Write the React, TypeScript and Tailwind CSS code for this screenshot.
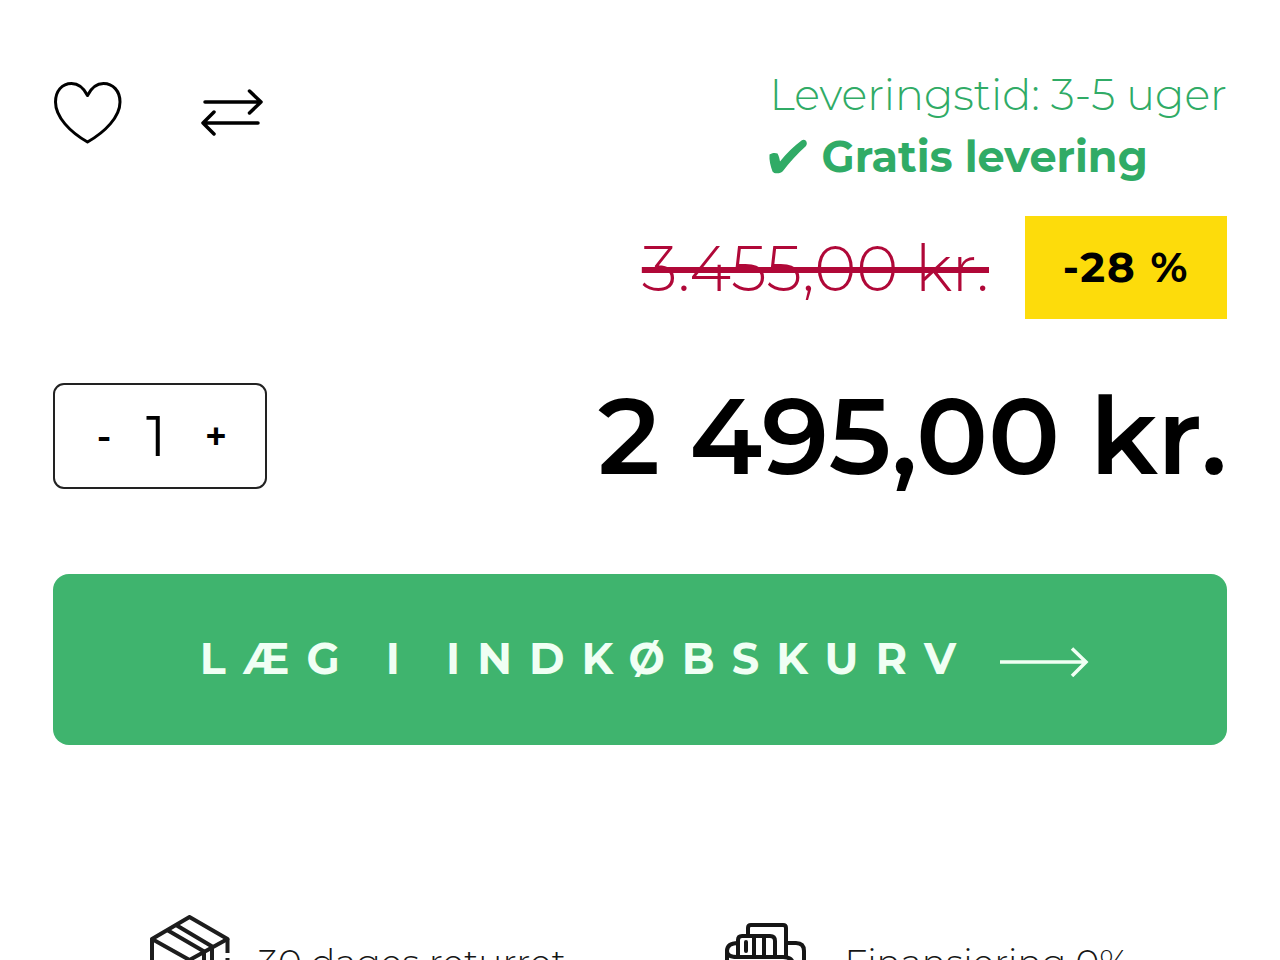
import { useState } from 'react'

function HeartIcon() {
  return (
    <svg width="70" height="64" viewBox="0 0 70 64" fill="none" stroke="currentColor" strokeWidth="3" strokeLinejoin="round">
      <path d="M34.5 14.5C31 7.500 25 2.500 18.500 2.500C9 2.500 2.500 10 2.500 21C2.500 36 17 51 34.500 61C52 51 67 36 67 21C67 10 60 2.500 50.500 2.500C44 2.500 38 7.500 34.500 14.500Z" />
    </svg>
  )
}

function CompareIcon() {
  return (
    <svg width="62" height="48" viewBox="0 0 62 48" fill="none" stroke="currentColor" strokeWidth="3.500" strokeLinecap="round" strokeLinejoin="round">
      <path d="M4 13H60M48.500 2L60 13L48.500 24" />
      <path d="M57 34H2M13 23L2 34L13 45" />
    </svg>
  )
}

function CheckIcon() {
  return (
    <svg width="40" height="36" viewBox="0 0 40 36" fill="currentColor">
      <path d="M0.500 15.500C2.500 14 6 13.500 8.500 14.500C10 17 10.500 20 11 22.500C17.500 14.500 25 7 32.500 1.500C34.500 0 37.500 1 37.800 4C37.900 5.500 37.300 6.500 36.500 7.500C28.500 14.500 21 23 14 32C12 34.500 5.500 35.500 3.500 32.500C1.500 27 0 21 0.500 15.500Z" />
    </svg>
  )
}

function ArrowIcon() {
  return (
    <svg width="90" height="34" viewBox="0 0 90 34" fill="none" stroke="currentColor" strokeWidth="3.500">
      <path d="M0 19H85M72 5.500L86 19L72 33" />
    </svg>
  )
}

function BoxIcon() {
  return (
    <svg width="80" height="94" viewBox="0 0 80 94" fill="none" stroke="#1d1d1d" strokeWidth="4" strokeLinejoin="round">
      <path d="M2 24L39.500 2L77.500 24L39.500 45Z" />
      <path d="M26 10L63 32M18 15.500L55 37" />
      <path d="M2 24V64L39.500 86V45" />
      <path d="M77.500 24V38M77.500 43V47M77.500 52V64L39.500 86" />
      <path d="M54 37V56L62 51V32" />
    </svg>
  )
}

function WalletIcon() {
  return (
    <svg width="84" height="80" viewBox="0 0 84 80" fill="none" stroke="#161616" strokeWidth="4" strokeLinejoin="round">
      <path d="M23 13V6Q23 3 26 3H58Q61 3 61 6V36" />
      <path d="M13 35V18Q13 14 17 14H45Q50 14 50 19V35" />
      <path d="M29 14V35M39 14V35" />
      <path d="M21 20V29" strokeLinecap="round" />
      <path d="M13 21Q2 21 2 29Q2 35 12 35H58Q68 35 68 43" />
      <path d="M2 29V70Q2 77 9 77H72Q79 77 79 70V29Q79 21 71 21H61" />
    </svg>
  )
}

export default function App() {
  const [quantity, setQuantity] = useState(1)

  return (
    <main className="min-h-screen bg-white px-[53px] pt-16 pb-16 font-['Montserrat','Inter',sans-serif] text-black">
      <div className="flex items-start justify-between">
        <div className="flex items-center gap-[78px] pt-[17px]">
          <button type="button" aria-label="Tilføj til ønskeliste">
            <HeartIcon />
          </button>
          <button type="button" aria-label="Sammenlign">
            <CompareIcon />
          </button>
        </div>
        <div className="text-[43px] leading-[62px] text-[#30ab66]">
          <p className="font-light">Leveringstid: 3-5 uger</p>
          <p className="flex items-center gap-3 font-bold">
            <CheckIcon />
            Gratis levering
          </p>
        </div>
      </div>

      <div className="mt-7 flex items-center justify-end gap-9">
        <s className="text-[64px] leading-[80px] font-light text-[#b00838] decoration-[6px]">3.455,00 kr.</s>
        <span className="flex h-[103px] w-[202px] items-center justify-center bg-[#fddc0b] text-[42px] font-bold tracking-[2px]">
          -28 %
        </span>
      </div>

      <div className="mt-16 flex items-center justify-between">
        <div className="flex h-[106px] w-[214px] items-center justify-center rounded-[11px] border-2 border-[#222]">
          <button
            type="button"
            aria-label="Færre"
            className="w-10 text-[38px] font-semibold"
            onClick={() => setQuantity(Math.max(1, quantity - 1))}
          >
            -
          </button>
          <input
            aria-label="Antal"
            className="w-[72px] bg-transparent pr-2 text-center text-[56px] leading-[64px] outline-none"
            value={quantity}
            onChange={(e) => setQuantity(Number(e.target.value) || 1)}
          />
          <button
            type="button"
            aria-label="Flere"
            className="w-10 text-[38px] font-semibold"
            onClick={() => setQuantity(quantity + 1)}
          >
            +
          </button>
        </div>
        <p className="text-[107px] leading-[104px] font-semibold">2 495,00 kr.</p>
      </div>

      <button
        type="button"
        className="mt-[85px] flex h-[171px] w-full items-center justify-center gap-[27px] rounded-2xl bg-[#3fb46e] pl-2.5 text-[43px] font-bold tracking-[17px] text-[#f0fff4]"
      >
        LÆG I INDKØBSKURV
        <ArrowIcon />
      </button>

      <ul className="mt-[170px] grid grid-cols-2 gap-x-[72px] pl-[97px] text-[36px] font-light text-[#161616]">
        <li className="flex items-center gap-7">
          <BoxIcon />
          30 dages returret
        </li>
        <li className="flex items-center gap-9">
          <WalletIcon />
          Finansiering 0%
        </li>
      </ul>
    </main>
  )
}
